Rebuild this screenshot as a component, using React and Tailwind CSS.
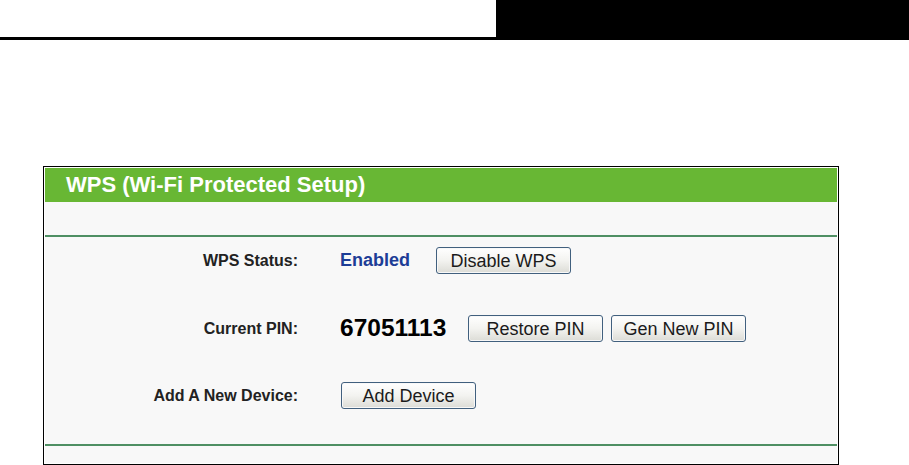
function WpsButton({ children, className = '' }) {
  return (
    <button
      type="button"
      className={`h-[27px] w-[135px] rounded-[3px] border border-[#41607e] bg-gradient-to-b from-white via-[#f3f3f0] to-[#dcdcd6] text-[18px] leading-none text-[#1b1b1b] shadow-[inset_0_0_0_1px_#f8f8f8] ${className}`}
    >
      {children}
    </button>
  )
}

export default function App() {
  return (
    <div className="h-[465px] w-[909px] overflow-hidden bg-white font-['Liberation_Sans',Arial,sans-serif]">
      {/* Page header strip */}
      <div className="flex h-[40px]">
        <div className="w-[496px] border-b-[3px] border-black"></div>
        <div className="flex-1 bg-black"></div>
      </div>

      {/* WPS panel */}
      <div className="ml-[43px] mt-[126px] w-[796px] border border-black bg-white p-px">
        <div className="flex h-[34px] items-center bg-[#68b734] pl-[21px]">
          <h2 className="text-[22px] font-bold leading-none text-white">
            WPS (Wi-Fi Protected Setup)
          </h2>
        </div>

        <div className="bg-[#f8f8f8]">
          <div className="h-[33px]"></div>
          <div className="h-[2px] bg-[#4f8f63]"></div>

          <div className="grid grid-cols-[253px_1fr] gap-x-[42px] pt-[10px] pb-[35px]">
            <div className="flex h-[27px] items-center justify-end text-[16px] font-bold text-[#222]">
              WPS Status:
            </div>
            <div className="flex h-[27px] items-center">
              <span className="w-[96px] text-[18px] font-bold text-[#1d3d96]">Enabled</span>
              <WpsButton>Disable WPS</WpsButton>
            </div>

            <div className="mt-[41px] flex h-[27px] items-center justify-end text-[16px] font-bold text-[#222]">
              Current PIN:
            </div>
            <div className="mt-[41px] flex h-[27px] items-center">
              <span className="w-[128px] text-[24.5px] font-bold leading-none text-black">67051113</span>
              <WpsButton>Restore PIN</WpsButton>
              <WpsButton className="ml-[8px]">Gen New PIN</WpsButton>
            </div>

            <div className="mt-[40px] flex h-[27px] items-center justify-end text-[16px] font-bold text-[#222]">
              Add A New Device:
            </div>
            <div className="mt-[40px] flex h-[27px] items-center">
              <WpsButton className="ml-px">Add Device</WpsButton>
            </div>
          </div>

          <div className="h-[2px] bg-[#4f8f63]"></div>
          <div className="h-[17px]"></div>
        </div>
      </div>
    </div>
  )
}
